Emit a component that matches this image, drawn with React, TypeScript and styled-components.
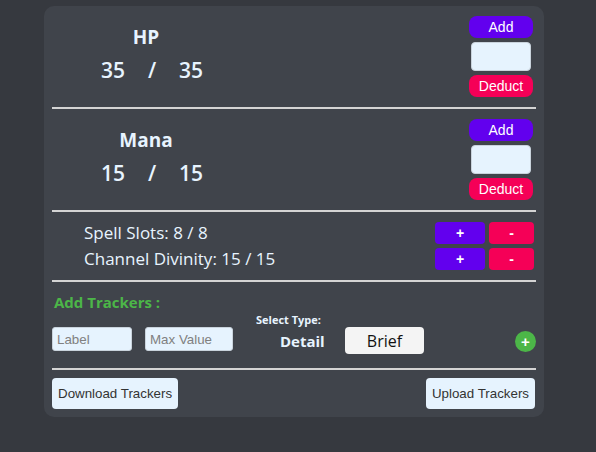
import React, { useState } from "react";
import styled, { createGlobalStyle } from "styled-components";

const GlobalStyle = createGlobalStyle`
    html, body {
        margin: 0;
        padding: 0;
        background: #36393f;
    }
    body {
        font-family: "Open Sans", "Noto Sans", sans-serif;
        color: #e8f4ff;
    }
`;

const Page = styled.div`
    min-height: 452px;
    padding-top: 6px;
    box-sizing: border-box;
`;

const Panel = styled.div`
    width: 500px;
    margin-left: 44px;
    box-sizing: border-box;
    padding: 0 8px 8px;
    background: #40444b;
    border-radius: 10px;
    display: flex;
    flex-direction: column;
`;

const Divider = styled.div`
    height: 2px;
    background: #d4d4d4;
`;

const Resource = styled.section`
    display: flex;
    align-items: center;
    padding: 10px 0;
`;

const ResourceInfo = styled.div`
    width: 188px;
    padding-bottom: 4px;
    display: flex;
    flex-direction: column;
    align-items: center;
`;

const ResourceName = styled.h2`
    margin: 0 0 8px;
    font-size: 19px;
    font-weight: 700;
    line-height: 22px;
`;

const Values = styled.div`
    display: flex;
    gap: 23px;
    font-size: 21px;
    font-weight: 600;
    line-height: 28px;
    padding-left: 12px;
`;

const Controls = styled.div`
    margin-left: auto;
    margin-right: 3px;
    width: 64px;
    display: flex;
    flex-direction: column;
    align-items: center;
    gap: 4px;
`;

const PillButton = styled.button<{ $tone: "add" | "deduct" }>`
    width: 64px;
    height: 22px;
    border: none;
    border-radius: 8px;
    padding: 0;
    background: ${(p) => (p.$tone === "add" ? "#6200ee" : "#f50057")};
    color: #ffffff;
    font-family: "Liberation Sans", Arial, sans-serif;
    font-size: 14px;
    cursor: pointer;
`;

const AmountInput = styled.input`
    width: 60px;
    height: 29px;
    box-sizing: border-box;
    border: 1px solid #c9d3dc;
    border-radius: 4px;
    background: #e6f3fe;
    padding: 0 4px;
`;

const Counters = styled.section`
    display: flex;
    flex-direction: column;
    gap: 4px;
    padding: 10px 2px 10px 32px;
`;

const CounterRow = styled.div`
    display: flex;
    align-items: center;
    gap: 4px;
    height: 22px;
`;

const CounterLabel = styled.span`
    margin-right: auto;
    font-size: 17px;
    line-height: 22px;
`;

const StepButton = styled.button<{ $tone: "add" | "deduct" }>`
    width: ${(p) => (p.$tone === "add" ? 50 : 45)}px;
    height: 22px;
    border: none;
    border-radius: 4px;
    padding: 0;
    background: ${(p) => (p.$tone === "add" ? "#6200ee" : "#f50057")};
    color: #ffffff;
    font-family: "Liberation Sans", Arial, sans-serif;
    font-size: 14px;
    font-weight: 700;
    cursor: pointer;
`;

const Trackers = styled.section`
    padding: 10px 0 14px;
    display: flex;
    flex-direction: column;
`;

const TrackersTitle = styled.h3`
    margin: 0 0 1px 2px;
    color: #4cb648;
    font-size: 15px;
    font-weight: 700;
    line-height: 20px;
`;

const TrackerRow = styled.div`
    display: flex;
    align-items: flex-end;
`;

const TextField = styled.input<{ $width: number }>`
    width: ${(p) => p.$width}px;
    height: 24px;
    box-sizing: border-box;
    margin: 0 13px 3px 0;
    border: 1px solid #c9d3dc;
    border-radius: 3px;
    background: #e6f3fe;
    padding: 0 4px;
    font-family: "Liberation Sans", Arial, sans-serif;
    font-size: 13.33px;
    color: #333;

    &::placeholder {
        color: #808080;
    }
`;

const TypeGroup = styled.div`
    margin-left: 10px;
    display: flex;
    flex-direction: column;
`;

const TypeLabel = styled.span`
    font-size: 11px;
    font-weight: 700;
    line-height: 14px;
`;

const TypeChoices = styled.div`
    display: flex;
    align-items: center;
    gap: 22px;
    padding-left: 24px;
`;

const TypeOption = styled.button<{ $active: boolean }>`
    height: 27px;
    border: none;
    border-radius: 4px;
    padding: 0;
    width: ${(p) => (p.$active ? 79 : 43)}px;
    background: ${(p) => (p.$active ? "#f4f4f4" : "transparent")};
    color: ${(p) => (p.$active ? "#111111" : "#e8f4ff")};
    font-family: "Open Sans", "Noto Sans", sans-serif;
    font-size: ${(p) => (p.$active ? 16 : 15)}px;
    font-weight: ${(p) => (p.$active ? 500 : 700)};
    cursor: pointer;
`;

const AddCircle = styled.button`
    margin: 0 0 2px auto;
    width: 21px;
    height: 21px;
    border-radius: 50%;
    border: none;
    padding: 0;
    background: #4cb648;
    color: #ffffff;
    font-family: "Liberation Sans", Arial, sans-serif;
    font-size: 15px;
    font-weight: 700;
    line-height: 21px;
    cursor: pointer;
`;

const FileRow = styled.div`
    display: flex;
    justify-content: space-between;
    padding: 8px 1px 0 0;
`;

const FileButton = styled.button`
    height: 31px;
    padding: 0 6px;
    border: none;
    border-radius: 4px;
    background: #e6f3fe;
    color: #333333;
    font-family: "Liberation Sans", Arial, sans-serif;
    font-size: 13.33px;
    cursor: pointer;
`;

type Pool = { name: string; current: number; max: number };
type Counter = { name: string; current: number; max: number };

const initPools: Pool[] = [
    { name: "HP", current: 35, max: 35 },
    { name: "Mana", current: 15, max: 15 },
];

const initCounters: Counter[] = [
    { name: "Spell Slots", current: 8, max: 8 },
    { name: "Channel Divinity", current: 15, max: 15 },
];

const App = () => {
    const [pools] = useState<Pool[]>(initPools);
    const [counters] = useState<Counter[]>(initCounters);
    const [type, setType] = useState<"Detail" | "Brief">("Brief");

    return (
        <>
            <GlobalStyle />
            <Page>
                <Panel>
                    {pools.map((pool) => (
                        <React.Fragment key={pool.name}>
                            <Resource>
                                <ResourceInfo>
                                    <ResourceName>{pool.name}</ResourceName>
                                    <Values>
                                        <span>{pool.current}</span>
                                        <span>/</span>
                                        <span>{pool.max}</span>
                                    </Values>
                                </ResourceInfo>
                                <Controls>
                                    <PillButton $tone="add">Add</PillButton>
                                    <AmountInput type="number" />
                                    <PillButton $tone="deduct">Deduct</PillButton>
                                </Controls>
                            </Resource>
                            <Divider />
                        </React.Fragment>
                    ))}

                    <Counters>
                        {counters.map((item) => (
                            <CounterRow key={item.name}>
                                <CounterLabel>
                                    {item.name}: {item.current} / {item.max}
                                </CounterLabel>
                                <StepButton $tone="add">+</StepButton>
                                <StepButton $tone="deduct">-</StepButton>
                            </CounterRow>
                        ))}
                    </Counters>
                    <Divider />

                    <Trackers>
                        <TrackersTitle>Add Trackers :</TrackersTitle>
                        <TrackerRow>
                            <TextField $width={80} placeholder="Label" />
                            <TextField $width={88} placeholder="Max Value" />
                            <TypeGroup>
                                <TypeLabel>Select Type:</TypeLabel>
                                <TypeChoices>
                                    <TypeOption
                                        $active={type === "Detail"}
                                        onClick={() => setType("Detail")}
                                    >
                                        Detail
                                    </TypeOption>
                                    <TypeOption
                                        $active={type === "Brief"}
                                        onClick={() => setType("Brief")}
                                    >
                                        Brief
                                    </TypeOption>
                                </TypeChoices>
                            </TypeGroup>
                            <AddCircle>+</AddCircle>
                        </TrackerRow>
                    </Trackers>
                    <Divider />

                    <FileRow>
                        <FileButton>Download Trackers</FileButton>
                        <FileButton>Upload Trackers</FileButton>
                    </FileRow>
                </Panel>
            </Page>
        </>
    );
};

export default App;
